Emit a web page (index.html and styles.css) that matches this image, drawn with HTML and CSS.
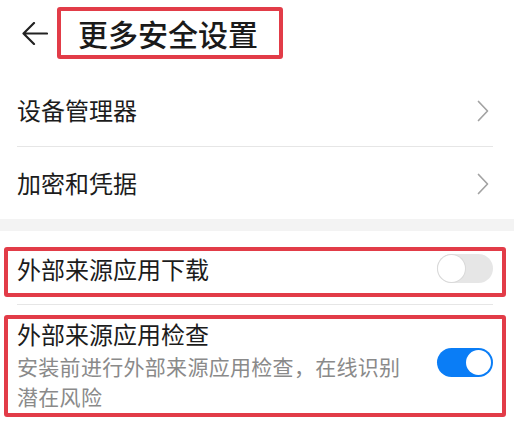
FILE: index.html
```html
<!DOCTYPE html>
<html lang="zh-CN">
<head>
<meta charset="utf-8">
<title>更多安全设置</title>
<link rel="stylesheet" href="styles.css">
</head>
<body>
<div class="page">
  <header class="header">
    <svg class="back" width="27" height="23" viewBox="0 0 27 23" aria-hidden="true">
      <path d="M26 11.5H2.5M13 1L2.5 11.5L13 22" fill="none" stroke="#222" stroke-width="2.2" stroke-linecap="round" stroke-linejoin="round"/>
    </svg>
    <div class="title-box"><h1 class="title">更多安全设置</h1></div>
  </header>

  <div class="list">
    <div class="item">
      <span class="item-text">设备管理器</span>
      <svg class="chev" width="12" height="22" viewBox="0 0 12 22" aria-hidden="true"><path d="M1.5 1.5L10.5 11L1.5 20.5" fill="none" stroke="#a3a3a3" stroke-width="1.7" stroke-linecap="round" stroke-linejoin="round"/></svg>
    </div>
    <div class="divider"></div>
    <div class="item">
      <span class="item-text">加密和凭据</span>
      <svg class="chev" width="12" height="22" viewBox="0 0 12 22" aria-hidden="true"><path d="M1.5 1.5L10.5 11L1.5 20.5" fill="none" stroke="#a3a3a3" stroke-width="1.7" stroke-linecap="round" stroke-linejoin="round"/></svg>
    </div>
  </div>

  <div class="band"></div>

  <div class="section">
    <div class="hl hl-one">
      <div class="switch-row">
        <span class="item-text">外部来源应用下载</span>
        <span class="toggle toggle-off"></span>
      </div>
    </div>
    <div class="divider divider-mid"></div>
    <div class="hl hl-two">
      <div class="switch-row switch-row-tall">
        <div class="texts">
          <div class="row-title">外部来源应用检查</div>
          <div class="row-sub">安装前进行外部来源应用检查，在线识别潜在风险</div>
        </div>
        <span class="toggle toggle-on"></span>
      </div>
    </div>
  </div>
</div>
</body>
</html>
```

FILE: styles.css
```css
* { box-sizing: border-box; }
html, body { margin: 0; padding: 0; background: #fff; }
body {
  font-family: "Noto Sans CJK SC", "Noto Sans", sans-serif;
  color: #1c1c1c;
  width: 514px;
  height: 422px;
  overflow: hidden;
}
.header {
  height: 74px;
  padding-top: 7px;
  display: flex;
  align-items: flex-start;
}
.back {
  display: block;
  margin-left: 21px;
  margin-top: 15px;
  margin-right: 9px;
}
.title-box {
  border: 4px solid #e23c48;
  border-radius: 3px;
  height: 52px;
  width: 226px;
  padding: 0 0 0 17px;
  display: flex;
  align-items: center;
}
.title {
  margin: 0;
  font-size: 30px;
  font-weight: 500;
  line-height: 36px;
  color: #1a1a1a;
  white-space: nowrap;
}
.item {
  height: 72px;
  display: flex;
  align-items: center;
  justify-content: space-between;
  padding: 0 25px 0 17px;
}
.item-text {
  font-size: 24px;
  line-height: 32px;
  color: #1c1c1c;
}
.chev { display: block; margin-top: 2px; }
.divider {
  height: 1px;
  background: #e6e6e6;
  margin: 0 21px 0 17px;
}
.band {
  height: 12px;
  background: #f3f3f3;
}
.section { padding-top: 16px; }
.hl {
  border: 4px solid #e23c48;
  border-radius: 3px;
  margin: 0 8px 0 4px;
}
.hl-one { height: 50px; }
.hl-two { height: 102px; }
.divider-mid { margin-top: 7px; margin-bottom: 10px; }
.switch-row {
  display: flex;
  align-items: center;
  justify-content: space-between;
  height: 36px;
  padding: 0 9px 0 9px;
}
.switch-row-tall {
  height: 94px;
  align-items: center;
}
.texts {
  width: 400px;
  align-self: flex-start;
}
.row-title {
  font-size: 24px;
  line-height: 30px;
  color: #1c1c1c;
}
.row-sub {
  margin-top: 2px;
  font-size: 21px;
  letter-spacing: 0.3px;
  line-height: 30px;
  color: #8a8a8a;
}
.toggle {
  position: relative;
  flex: none;
  width: 56px;
  height: 29px;
  border-radius: 15px;
}
.toggle::after {
  content: "";
  position: absolute;
  border-radius: 50%;
  background: #fff;
}
.toggle-off {
  background: #e6e6e6;
  margin-top: -2px;
}
.toggle-off::after {
  width: 27px;
  height: 27px;
  left: 1px;
  top: 1px;
  box-shadow: 0 0 0 1px #d9d9d9;
}
.toggle-on {
  background: #0a7df6;
  margin-bottom: 7px;
}
.toggle-on::after {
  width: 25px;
  height: 25px;
  right: 2px;
  top: 2px;
}
```
